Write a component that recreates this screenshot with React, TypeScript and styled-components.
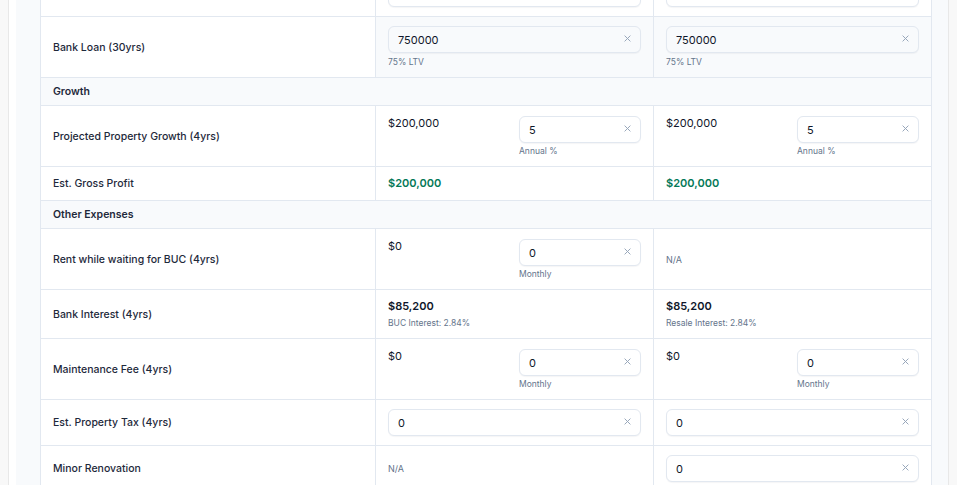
import React from "react";
import styled, { createGlobalStyle } from "styled-components";

const Global = createGlobalStyle`
  html, body { margin: 0; padding: 0; background: #f8f8f8; }
  body { font-family: Inter, "Noto Sans", sans-serif; -webkit-font-smoothing: antialiased; }
  * { box-sizing: border-box; }
`;

const Page = styled.div`
  height: 485px;
  overflow: hidden;
  padding: 0 8px;
  background: #f8f8f8;
`;

const Card = styled.div`
  width: 941px;
  height: 100%;
  display: flow-root;
  background: #ffffff;
  border-left: 1px solid #e8e8e8;
  border-right: 1px solid #e8e8e8;
  padding-left: 7px;
`;

const Panel = styled.div`
  height: 100%;
  display: flow-root;
  background: #f8fafc;
  padding: 0 16px 0 24px;
`;

const Table = styled.div`
  margin-top: -30px;
  width: 892px;
  border-left: 1px solid #e2e8f0;
  border-right: 1px solid #e2e8f0;
  border-top: 1px solid #e2e8f0;
  background: #ffffff;
`;

const Row = styled.div`
  display: grid;
  grid-template-columns: 335px 278px 277px;
  border-bottom: 1px solid #e2e8f0;
`;

const Section = styled.div`
  border-bottom: 1px solid #e2e8f0;
  background: #f8fafc;
  padding: 7px 12px 6px;
  font-size: 10.5px;
  line-height: 14px;
  font-weight: 600;
  color: #1e293b;
`;

const LabelCell = styled.div`
  display: flex;
  align-items: center;
  padding: 0 12px;
  border-right: 1px solid #e2e8f0;
  font-size: 10.5px;
  font-weight: 500;
  color: #1e293b;
`;

const Cell = styled.div<{ $tint?: boolean; $last?: boolean; $center?: boolean }>`
  padding: 9px 12px 9px;
  border-right: ${(p) => (p.$last ? "none" : "1px solid #e2e8f0")};
  background: ${(p) => (p.$tint ? "#f8fafc" : "#ffffff")};
  display: flex;
  flex-direction: column;
  justify-content: ${(p) => (p.$center ? "center" : "flex-start")};
`;

const Split = styled.div`
  display: grid;
  grid-template-columns: 1fr 122px;
  column-gap: 8px;
  padding-top: 1px;
`;

const Value = styled.div<{ $bold?: boolean; $green?: boolean }>`
  font-size: 11px;
  line-height: 15px;
  font-weight: ${(p) => (p.$bold ? 600 : 400)};
  color: ${(p) => (p.$green ? "#047857" : "#0f172a")};
`;

const Hint = styled.div<{ $tight?: boolean }>`
  margin-top: ${(p) => (p.$tight ? "2px" : "3px")};
  font-size: 8.5px;
  line-height: 12px;
  color: #64748b;
`;

const Sub = styled.div`
  margin-top: 3px;
  font-size: 8.5px;
  line-height: 12px;
  color: #64748b;
`;

const NA = styled.div`
  font-size: 9px;
  color: #64748b;
`;

const InputBox = styled.div<{ $tint?: boolean }>`
  position: relative;
  height: 27px;
  border: 1px solid #e2e8f0;
  border-radius: 6px;
  background: ${(p) => (p.$tint ? "#f8fafc" : "#ffffff")};
  box-shadow: 0 1px 1px rgba(15, 23, 42, 0.04);
  display: flex;
  align-items: center;
  padding: 0 9px;
  font-size: 11px;
  color: #0f172a;
`;

const Clear = styled.svg`
  position: absolute;
  right: 9px;
  top: 8px;
  width: 7px;
  height: 7px;
`;

const Input: React.FC<{ value: string; tint?: boolean }> = ({ value, tint }) => (
  <InputBox $tint={tint}>
    {value}
    <Clear viewBox="0 0 8 8">
      <path d="M1 1L7 7M7 1L1 7" stroke="#94a3b8" strokeWidth="1.1" strokeLinecap="round" />
    </Clear>
  </InputBox>
);

const SplitInput: React.FC<{ amount: string; value: string; hint: string }> = ({ amount, value, hint }) => (
  <Split>
    <Value>{amount}</Value>
    <div>
      <Input value={value} />
      <Hint $tight>{hint}</Hint>
    </div>
  </Split>
);

export default function App() {
  return (
    <Page>
      <Global />
      <Card>
        <Panel>
          <Table>
            <Row>
              <LabelCell>Cash Downpayment</LabelCell>
              <Cell><Input value="250000" /></Cell>
              <Cell $last><Input value="250000" /></Cell>
            </Row>
            <Row>
              <LabelCell>Bank Loan (30yrs)</LabelCell>
              <Cell $tint>
                <Input value="750000" tint />
                <Hint>75% LTV</Hint>
              </Cell>
              <Cell $tint $last>
                <Input value="750000" tint />
                <Hint>75% LTV</Hint>
              </Cell>
            </Row>
            <Section>Growth</Section>
            <Row>
              <LabelCell>Projected Property Growth (4yrs)</LabelCell>
              <Cell><SplitInput amount="$200,000" value="5" hint="Annual %" /></Cell>
              <Cell $last><SplitInput amount="$200,000" value="5" hint="Annual %" /></Cell>
            </Row>
            <Row>
              <LabelCell>Est. Gross Profit</LabelCell>
              <Cell><Value $bold $green>$200,000</Value></Cell>
              <Cell $last><Value $bold $green>$200,000</Value></Cell>
            </Row>
            <Section>Other Expenses</Section>
            <Row>
              <LabelCell>Rent while waiting for BUC (4yrs)</LabelCell>
              <Cell><SplitInput amount="$0" value="0" hint="Monthly" /></Cell>
              <Cell $last $center><NA>N/A</NA></Cell>
            </Row>
            <Row>
              <LabelCell>Bank Interest (4yrs)</LabelCell>
              <Cell $center>
                <Value $bold>$85,200</Value>
                <Sub>BUC Interest: 2.84%</Sub>
              </Cell>
              <Cell $last $center>
                <Value $bold>$85,200</Value>
                <Sub>Resale Interest: 2.84%</Sub>
              </Cell>
            </Row>
            <Row>
              <LabelCell>Maintenance Fee (4yrs)</LabelCell>
              <Cell><SplitInput amount="$0" value="0" hint="Monthly" /></Cell>
              <Cell $last><SplitInput amount="$0" value="0" hint="Monthly" /></Cell>
            </Row>
            <Row>
              <LabelCell>Est. Property Tax (4yrs)</LabelCell>
              <Cell><Input value="0" /></Cell>
              <Cell $last><Input value="0" /></Cell>
            </Row>
            <Row>
              <LabelCell>Minor Renovation</LabelCell>
              <Cell $center><NA>N/A</NA></Cell>
              <Cell $last><Input value="0" /></Cell>
            </Row>
          </Table>
        </Panel>
      </Card>
    </Page>
  );
}
